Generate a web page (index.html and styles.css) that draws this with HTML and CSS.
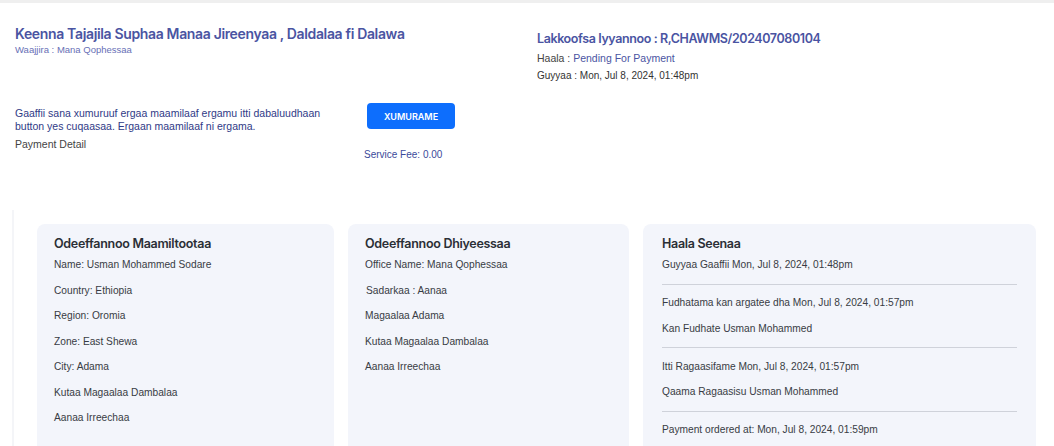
FILE: index.html
```html
<!DOCTYPE html>
<html>
<head>
<meta charset="utf-8">
<link rel="stylesheet" href="styles.css">
</head>
<body>
<div class="topbar"></div>
<div class="header">
  <div class="head-left">
    <h1 class="title">Keenna Tajajila Suphaa Manaa Jireenyaa , Daldalaa fi Dalawa</h1>
    <div class="subtitle">Waajjira : Mana Qophessaa</div>
  </div>
  <div class="head-right">
    <div class="app-no">Lakkoofsa Iyyannoo : R,CHAWMS/202407080104</div>
    <div class="status">Haala : <span class="status-val">Pending For Payment</span></div>
    <div class="date">Guyyaa : Mon, Jul 8, 2024, 01:48pm</div>
  </div>
</div>
<div class="action-row">
  <div class="action-text">
    <p class="notice">Gaaffii sana xumuruuf ergaa maamilaaf ergamu itti dabaluudhaan button yes cuqaasaa. Ergaan maamilaaf ni ergama.</p>
    <div class="pay-detail">Payment Detail</div>
  </div>
  <div class="action-btn">
    <button class="btn">XUMURAME</button>
    <div class="fee">Service Fee: 0.00</div>
  </div>
</div>
<div class="cards-wrap">
  <div class="cards">
    <div class="card c1">
      <h3 class="card-title">Odeeffannoo Maamiltootaa</h3>
      <p class="item">Name: Usman Mohammed Sodare</p>
      <p class="item">Country: Ethiopia</p>
      <p class="item">Region: Oromia</p>
      <p class="item">Zone: East Shewa</p>
      <p class="item">City: Adama</p>
      <p class="item">Kutaa Magaalaa Dambalaa</p>
      <p class="item">Aanaa Irreechaa</p>
    </div>
    <div class="card c2">
      <h3 class="card-title">Odeeffannoo Dhiyeessaa</h3>
      <p class="item">Office Name: Mana Qophessaa</p>
      <p class="item indent">Sadarkaa : Aanaa</p>
      <p class="item">Magaalaa Adama</p>
      <p class="item">Kutaa Magaalaa Dambalaa</p>
      <p class="item">Aanaa Irreechaa</p>
    </div>
    <div class="card c3">
      <h3 class="card-title">Haala Seenaa</h3>
      <p class="item">Guyyaa Gaaffii Mon, Jul 8, 2024, 01:48pm</p>
      <hr class="sep">
      <p class="item">Fudhatama kan argatee dha Mon, Jul 8, 2024, 01:57pm</p>
      <p class="item">Kan Fudhate Usman Mohammed</p>
      <hr class="sep">
      <p class="item">Itti Ragaasifame Mon, Jul 8, 2024, 01:57pm</p>
      <p class="item">Qaama Ragaasisu Usman Mohammed</p>
      <hr class="sep">
      <p class="item">Payment ordered at: Mon, Jul 8, 2024, 01:59pm</p>
    </div>
  </div>
</div>
</body>
</html>
```
FILE: styles.css
```css
* { box-sizing: border-box; }
html, body { margin: 0; padding: 0; background: #fff; overflow: hidden; }
body { font-family: "Liberation Sans", Arial, sans-serif; color: #333; width: 1054px; height: 446px; }

.topbar { height: 3px; background: #efefef; }

.header { display: flex; padding: 22px 0 0 15px; }
.head-left { width: 522px; }
.title { margin: 0; font-family: Inter, "Liberation Sans", sans-serif; font-weight: 600; font-size: 14px; line-height: 18px; color: #4a54a2; letter-spacing: -0.35px; }
.subtitle { font-size: 9.5px; line-height: 12px; color: #6870b6; margin-top: 1px; }

.head-right { padding-top: 6px; }
.app-no { font-family: Inter, "Liberation Sans", sans-serif; font-weight: 600; font-size: 12.5px; line-height: 16px; color: #4a54a2; letter-spacing: -0.4px; }
.status { font-size: 10.5px; line-height: 16px; color: #444; margin-top: 3px; }
.status-val { color: #4a54a2; }
.date { font-size: 10px; line-height: 14px; color: #333; margin-top: 3px; }

.action-row { display: flex; padding: 0 0 0 15px; margin-top: 19px; }
.action-text { width: 349px; padding-top: 5px; }
.notice { margin: 0; max-width: 320px; font-size: 10.5px; line-height: 13px; color: #2f3a86; }
.pay-detail { font-size: 10.5px; line-height: 14px; color: #444; margin-top: 4px; }
.action-btn { display: flex; flex-direction: column; align-items: flex-start; }
.btn { margin: 1px 0 0 3px; width: 88px; height: 26px; border: none; border-radius: 4px; background: #0d6efd; color: #fff; font-family: Inter, "Liberation Sans", sans-serif; font-weight: 600; font-size: 9px; padding: 0; }
.fee { font-size: 10px; line-height: 12px; color: #3b4a9a; margin-top: 20px; }

.cards-wrap { margin: 49px 0 0 12px; border-left: 2px solid #f4f5f8; padding: 14px 19px 0 23px; height: 300px; }
.cards { display: grid; grid-template-columns: 297px 281px 393px; column-gap: 14px; }
.card { background: #f3f5fb; border-radius: 8px; padding: 12px 17px 0 17px; height: 260px; }
.c3 { padding-left: 19px; padding-right: 19px; }
.card-title { margin: 0 0 6px 0; font-family: Inter, "Liberation Sans", sans-serif; font-weight: 600; font-size: 12.5px; line-height: 16px; color: #2b2f36; letter-spacing: -0.3px; }
.item { margin: 0 0 11.5px 0; font-size: 10.2px; line-height: 14px; color: #383c44; }
.indent { padding-left: 1px; }
.sep { border: none; border-top: 1px solid #cfd2da; margin: 0 0 11.5px 0; }
```
